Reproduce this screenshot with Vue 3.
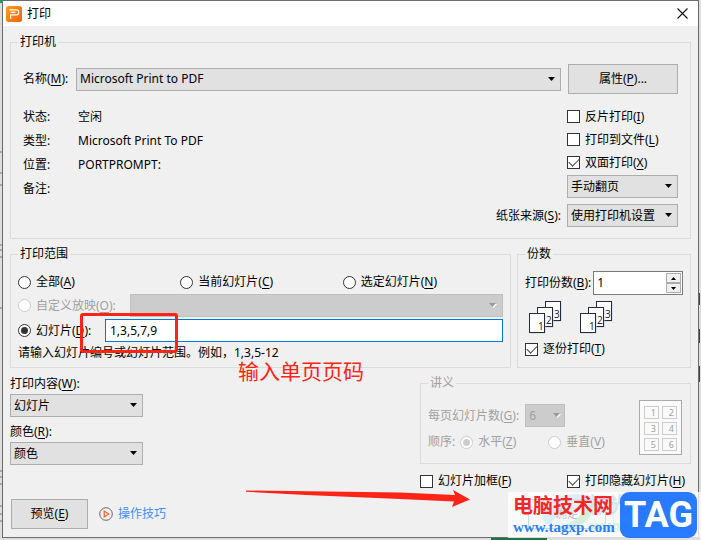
<template>
  <div class="desktop">
    <!-- Window behind the dialog -->
    <svg class="behind behind-left" viewBox="0 0 3 540" aria-hidden="true">
      <path d="M0 0h2v3H0z" fill="#1f9d5b" />
      <path d="M0 152h2M0 173h2M0 185h2M0 245h2M0 250h2M0 257h2M0 308h2M0 471h2M0 477h2M0 484h2M0 506h2M0 514h2M0 521h2" stroke="#777" />
    </svg>
    <svg class="behind behind-right" viewBox="0 0 2 540" aria-hidden="true">
      <path d="M0 293v12M0 329v14M0 366v16" stroke="#444" stroke-width="2" />
    </svg>

    <div class="dialog">
      <header class="titlebar">
        <svg class="logo" viewBox="0 0 16 16" aria-hidden="true">
          <defs>
            <linearGradient id="logoFill" x1="0" y1="0" x2="1" y2="1">
              <stop offset="0" stop-color="#ff9c1c" />
              <stop offset="1" stop-color="#f2640c" />
            </linearGradient>
          </defs>
          <rect width="16" height="16" rx="2.5" fill="url(#logoFill)" />
          <path d="M3.4 3.8h7.2q2 0 2 2v1q0 2-2 2H4.6v4M4.6 6.3h4.8" fill="none" stroke="#fff" stroke-width="1.2" />
        </svg>
        <h1>打印</h1>
        <button class="close" type="button" aria-label="关闭">
          <svg viewBox="0 0 11 11"><path d="M.5.5l10 10M10.5.5l-10 10" stroke="#111" stroke-width="1.1" /></svg>
        </button>
      </header>

      <form class="body" @submit.prevent>
        <!-- Printer part -->
        <fieldset class="printer">
          <legend>打印机</legend>
          <div class="name-row">
            <label for="printer">名称(<u>M</u>):</label>
            <span class="select grow">
              <select id="printer" v-model="printer"><option>Microsoft Print to PDF</option></select>
              <svg viewBox="0 0 7 4"><path d="M0 0h7L3.5 4z" /></svg>
            </span>
            <button class="btn props" type="button">属性(<u>P</u>)...</button>
          </div>
          <div class="details">
            <dl>
              <template v-for="d in details" :key="d.label">
                <dt>{{ d.label }}:</dt>
                <dd>{{ d.value }}</dd>
              </template>
            </dl>
            <div class="options">
              <label v-for="o in options" :key="o.key" class="check option">
                <input v-model="o.on" type="checkbox" />
                <span>{{ o.label }}(<u>{{ o.key }}</u>)</span>
              </label>
              <span class="select side duplex">
                <select v-model="duplex" aria-label="双面打印"><option>手动翻页</option></select>
                <svg viewBox="0 0 7 4"><path d="M0 0h7L3.5 4z" /></svg>
              </span>
              <div class="source">
                <label for="source">纸张来源(<u>S</u>):</label>
                <span class="select side">
                  <select id="source" v-model="source"><option>使用打印机设置</option></select>
                  <svg viewBox="0 0 7 4"><path d="M0 0h7L3.5 4z" /></svg>
                </span>
              </div>
            </div>
          </div>
        </fieldset>

        <div class="middle">
          <!-- Range part -->
          <fieldset class="range">
            <legend>打印范围</legend>
            <div class="range-top">
              <label v-for="r in ranges" :key="r.key" class="check">
                <input v-model="range" type="radio" name="range" :value="r.key" />
                <span>{{ r.label }}(<u>{{ r.key }}</u>)</span>
              </label>
            </div>
            <div class="range-row">
              <label class="check custom disabled">
                <input v-model="range" type="radio" name="range" value="O" disabled />
                <span>自定义放映(<u>O</u>):</span>
              </label>
              <span class="select grow off">
                <select aria-label="自定义放映" disabled></select>
                <svg viewBox="0 0 8 5"><path d="M1 1h7L4.500 5z" fill="#fff" /><path d="M0 0h7L3.500 4z" /></svg>
              </span>
            </div>
            <div class="range-row">
              <label class="check slides">
                <input v-model="range" type="radio" name="range" value="D" />
                <span>幻灯片(<u>D</u>):</span>
              </label>
              <input v-model="pages" class="pages grow" type="text" aria-label="幻灯片编号" />
            </div>
            <p class="hint">请输入幻灯片编号或幻灯片范围。例如，1,3,5-12</p>
          </fieldset>

          <!-- Copies part -->
          <fieldset class="copies">
            <legend>份数</legend>
            <div class="count-row">
              <label for="copies">打印份数(<u>B</u>):</label>
              <div class="spin">
                <input id="copies" v-model.number="copies" type="text" />
                <div class="steps">
                  <button type="button" aria-label="增加" @click="copies++">
                    <svg viewBox="0 0 5 3"><path d="M0 3h5L2.500 0z" /></svg>
                  </button>
                  <button type="button" aria-label="减少" @click="copies = Math.max(1, copies - 1)">
                    <svg viewBox="0 0 5 3"><path d="M0 0h5L2.500 3z" /></svg>
                  </button>
                </div>
              </div>
            </div>
            <div class="stacks">
              <svg v-for="s in 2" :key="s" viewBox="0 0 34 34" aria-hidden="true">
                <g v-for="p in sheets" :key="p.n">
                  <rect :x="p.x + 1.5" :y="p.y + 1.5" width="15" height="19" fill="#c9ccd6" />
                  <rect :x="p.x + .5" :y="p.y + .5" width="15" height="19" fill="#fff" stroke="#252a3c" />
                  <text :x="p.x + 9" :y="p.y + 17">{{ p.n }}</text>
                </g>
              </svg>
            </div>
            <label class="check">
              <input v-model="collate" type="checkbox" />
              <span>逐份打印(<u>T</u>)</span>
            </label>
          </fieldset>
        </div>

        <div class="lower">
          <div class="content">
            <label for="what">打印内容(<u>W</u>):</label>
            <span class="select">
              <select id="what" v-model="what"><option>幻灯片</option></select>
              <svg viewBox="0 0 7 4"><path d="M0 0h7L3.5 4z" /></svg>
            </span>
            <label for="color">颜色(<u>R</u>):</label>
            <span class="select">
              <select id="color" v-model="color"><option>颜色</option></select>
              <svg viewBox="0 0 7 4"><path d="M0 0h7L3.5 4z" /></svg>
            </span>
          </div>

          <div class="right">
            <!-- Handout part -->
            <fieldset class="handout disabled" disabled>
              <legend>讲义</legend>
              <div class="handout-fields">
                <div class="per-page">
                  <label for="per">每页幻灯片数(<u>G</u>):</label>
                  <span class="select off">
                    <select id="per"><option>6</option></select>
                    <svg viewBox="0 0 8 5"><path d="M1 1h7L4.500 5z" fill="#fff" /><path d="M0 0h7L3.500 4z" /></svg>
                  </span>
                </div>
                <div class="order">
                  <span>顺序:</span>
                  <label class="check"><input type="radio" name="order" checked /><span>水平(<u>Z</u>)</span></label>
                  <label class="check"><input type="radio" name="order" /><span>垂直(<u>V</u>)</span></label>
                </div>
              </div>
              <div class="thumb">
                <span v-for="n in 6" :key="n">{{ n }}</span>
              </div>
            </fieldset>
            <div class="extras">
              <label class="check"><input v-model="frame" type="checkbox" /><span>幻灯片加框(<u>F</u>)</span></label>
              <label class="check"><input v-model="hidden" type="checkbox" /><span>打印隐藏幻灯片(<u>H</u>)</span></label>
            </div>
          </div>
        </div>

        <footer class="footer">
          <button class="btn preview" type="button">预览(<u>E</u>)</button>
          <a class="tips" href="#">
            <svg viewBox="0 0 14 14" aria-hidden="true">
              <circle cx="7" cy="7" r="6.300" fill="none" stroke="#666" />
              <path d="M5.200 4v6l4.500-3z" fill="none" stroke="#f0602a" stroke-width="1.200" />
            </svg>
            操作技巧
          </a>
          <button class="btn ok" type="submit">确定</button>
          <button class="btn cancel" type="button">取消</button>
        </footer>
      </form>
    </div>

    <!-- Notes over the dialog -->
    <div class="mark-box"></div>
    <p class="mark-text">输入单页页码</p>
    <svg class="mark-arrow" viewBox="0 0 224 20" aria-hidden="true">
      <path d="M0 3.500L154 5.500L209 8L207 3L224 12.500L206 20L208 14.500L154 12L60 8L0 4.800Z" fill="#fb2416" />
    </svg>

    <div class="green-bar"></div>
    <div class="stamp">
      <svg class="swirl" viewBox="0 0 60 42" aria-hidden="true">
        <path d="M2 24C4 5 32-3 52 5C34 5 20 14 13 28C8 35 2 33 2 24z" fill="#d3e8fa" />
        <path d="M8 36C28 36 42 24 49 9C58 24 38 43 8 36z" fill="#c9ecd0" />
        <path d="M17 25C24 14 36 9 47 10C38 18 29 27 17 25z" fill="#e1eff3" />
      </svg>
      <div class="faint">
        <span class="faint-name">极光下载站</span>
        <span class="faint-url">www.xz7.com</span>
      </div>
      <div class="site">
        <strong>电脑技术网</strong>
        <span>www.tagxp.com</span>
      </div>
      <div class="tag">TAG</div>
    </div>
  </div>
</template>

<script setup>
import { ref } from "vue";

const printer = ref("Microsoft Print to PDF");
const duplex = ref("手动翻页");
const source = ref("使用打印机设置");
const range = ref("D");
const pages = ref("1,3,5,7,9");
const copies = ref(1);
const collate = ref(true);
const what = ref("幻灯片");
const color = ref("颜色");
const frame = ref(false);
const hidden = ref(true);

const details = [
  { label: "状态", value: "空闲" },
  { label: "类型", value: "Microsoft Print To PDF" },
  { label: "位置", value: "PORTPROMPT:" },
  { label: "备注", value: "" },
];
const options = ref([
  { label: "反片打印", key: "I", on: false },
  { label: "打印到文件", key: "L", on: false },
  { label: "双面打印", key: "X", on: true },
]);
const ranges = [
  { label: "全部", key: "A" },
  { label: "当前幻灯片", key: "C" },
  { label: "选定幻灯片", key: "N" },
];
const sheets = [
  { n: 3, x: 16, y: 0 },
  { n: 2, x: 8, y: 6 },
  { n: 1, x: 0, y: 12 },
];
</script>

<style>
body {
  background: #dedede;
}
</style>

<style scoped>
.desktop {
  position: relative;
  padding: 0 2px 2px;
  font-family: "Noto Sans", "Noto Sans CJK SC", sans-serif;
  font-size: 12px;
  line-height: 16px;
  color: #000;
}
.desktop * {
  box-sizing: border-box;
}
.behind {
  position: absolute;
  top: 0;
  height: 540px;
}
.behind-left {
  left: 0;
  width: 3px;
}
.behind-right {
  right: 0;
  width: 2px;
}
.dialog {
  position: relative;
  border: 1px solid #6b6b6b;
  background: #f0f0f0;
}

/* Title bar */
.titlebar {
  display: flex;
  align-items: center;
  gap: 5px;
  height: 25px;
  padding: 0 10px 0 3px;
  background: #fff;
}
.logo {
  width: 16px;
  height: 16px;
}
h1 {
  flex: 1;
  margin: 0;
  font-size: 12px;
  font-weight: 400;
}
.close {
  display: flex;
  padding: 0;
  border: 0;
  background: none;
}
.close svg {
  width: 11px;
  height: 11px;
}

.body {
  padding: 8px 7px 8px;
}
fieldset {
  min-width: 0;
  margin: 0;
  border: 1px solid #dcdcdc;
}
legend {
  height: 16px;
  padding: 0 2px;
}
u {
  text-underline-offset: 2px;
}
.grow {
  flex: 1;
}
.disabled {
  color: #a0a0a0;
}

/* Controls */
input,
select,
button {
  margin: 0;
  font: inherit;
  color: inherit;
}
.select {
  position: relative;
  display: block;
  height: 23px;
}
.select select {
  display: block;
  width: 100%;
  height: 23px;
  padding: 0 3px;
  border: 1px solid #adadad;
  border-radius: 0;
  background: #e1e1e1;
  appearance: none;
}
.select svg {
  position: absolute;
  top: 9px;
  right: 6px;
  width: 7px;
  height: 4px;
  pointer-events: none;
}
.select.off select {
  border-color: #bfbfbf;
  background: #ccc;
  color: #a0a0a0;
  opacity: 1;
}
.select.off svg {
  width: 8px;
  height: 5px;
  fill: #999;
}
.btn {
  height: 30px;
  padding: 0;
  border: 1px solid #adadad;
  background: #e1e1e1;
}
.check {
  display: flex;
  align-items: center;
  gap: 5px;
  white-space: nowrap;
}
.check input {
  display: grid;
  place-content: center;
  flex: none;
  width: 13px;
  height: 13px;
  border: 1px solid #333;
  background: #fff;
  appearance: none;
}
.check input[type="checkbox"]:checked::before {
  content: "";
  width: 9px;
  height: 5px;
  margin-bottom: 3px;
  border: solid #444;
  border-width: 0 0 1px 1px;
  transform: rotate(-45deg);
}
.check input[type="radio"] {
  border-radius: 50%;
}
.check input[type="radio"]:checked::before {
  content: "";
  width: 7px;
  height: 7px;
  border-radius: 50%;
  background: #333;
}
.check input[type="radio"]:disabled {
  border-color: #ccc;
}
.check input[type="radio"]:disabled::before {
  background: #ccc;
}

/* Printer part */
.printer {
  padding: 14px 12px 11px;
}
.printer legend {
  margin-left: -5px;
}
.name-row {
  display: flex;
  align-items: center;
}
.name-row label {
  width: 53px;
}
.props {
  width: 110px;
  margin-left: 7px;
}
.details {
  display: flex;
  justify-content: space-between;
  margin-top: 11px;
}
dl {
  display: grid;
  grid-template-columns: 55px auto;
  grid-auto-rows: 24px;
  align-items: center;
  margin: 0;
}
dd {
  margin: 0;
}
.options {
  display: flex;
  flex-direction: column;
  align-items: flex-end;
}
.option {
  width: 111px;
  height: 23px;
}
.side {
  width: 111px;
}
.duplex {
  margin-top: 1px;
}
.source {
  display: flex;
  align-items: center;
  gap: 6px;
  margin-top: 6px;
}

/* Range part */
.middle {
  display: flex;
  gap: 6px;
  margin-top: 7px;
}
.range {
  flex: 1;
  padding: 8px 7px 5px;
}
.range-top {
  display: grid;
  grid-template-columns: 1fr 1fr 1fr;
  column-gap: 2px;
  height: 24px;
}
.range-row {
  display: flex;
  margin-bottom: 2px;
}
.custom {
  width: 112px;
}
.slides {
  width: 87px;
}
.pages {
  min-width: 0;
  height: 23px;
  padding: 0 4px;
  border: 1px solid #0078d7;
  background: #fff;
}
.hint {
  margin: 0;
  line-height: 18px;
}

/* Copies part */
.copies {
  width: 174px;
  padding: 9px 7px 5px;
}
.count-row {
  display: flex;
  align-items: center;
  gap: 2px;
  white-space: nowrap;
}
.spin {
  display: flex;
  flex: 1;
  height: 24px;
  padding: 1px;
  border: 1px solid #7a7a7a;
  background: #fff;
}
.spin input {
  flex: 1;
  width: 0;
  padding: 0 2px;
  border: 0;
}
.steps {
  display: grid;
  width: 15px;
}
.steps button {
  display: grid;
  place-content: center;
  min-height: 0;
  padding: 0;
  border: 1px solid #acacac;
  background: #f0f0f0;
}
.steps svg {
  display: block;
  width: 5px;
  height: 3px;
}
.stacks {
  display: flex;
  gap: 17px;
  margin: 6px 4px;
}
.stacks svg {
  width: 34px;
  height: 34px;
}
.stacks text {
  font: 10px "Noto Sans", sans-serif;
  fill: #252a3c;
}

/* Lower part */
.lower {
  display: flex;
  justify-content: space-between;
  margin-top: 7px;
}
.content {
  width: 133px;
}
.content > label {
  display: block;
  height: 19px;
  line-height: 18px;
}
.content .select {
  margin-bottom: 6px;
}
.right {
  width: 271px;
}
.handout {
  display: flex;
  justify-content: space-between;
  padding: 9px 8px 8px 7px;
}
.per-page {
  display: flex;
  align-items: center;
  gap: 6px;
  margin-top: 4px;
}
.per-page .select {
  width: 40px;
}
.per-page .select svg {
  right: 4px;
}
.order {
  display: flex;
  gap: 5px;
  margin-top: 7px;
}
.order label + label {
  margin-left: 27px;
}
.thumb {
  display: grid;
  grid-template-columns: 1fr 1fr;
  gap: 3px;
  width: 43px;
  height: 55px;
  padding: 5px 4px 6px;
  border: 1px solid #aaa;
  background: #fafafa;
}
.thumb span {
  padding-right: 2px;
  border: 1px solid #ccc;
  font-size: 9px;
  line-height: 11px;
  text-align: right;
}
.extras {
  display: grid;
  grid-template-columns: 147px 1fr;
  align-items: center;
  height: 18px;
  margin-top: 8px;
}

.footer {
  display: flex;
  align-items: center;
  margin-top: 9px;
  padding-left: 1px;
}
.preview {
  width: 77px;
}
.tips {
  display: flex;
  align-items: center;
  gap: 5px;
  margin: 0 auto 0 11px;
  color: #3f8ef5;
  text-decoration: none;
}
.tips svg {
  width: 14px;
  height: 14px;
}
.ok,
.cancel {
  width: 78px;
}
.ok {
  border-color: #0078d7;
}
.cancel {
  margin-left: 7px;
}

/* Notes */
.mark-box {
  position: absolute;
  top: 313px;
  left: 80px;
  width: 98px;
  height: 40px;
  border: 3px solid #fb2416;
  border-radius: 3px;
}
.mark-text {
  position: absolute;
  top: 358px;
  left: 238px;
  margin: 0;
  font-size: 21px;
  line-height: 26px;
  color: #fb2416;
}
.mark-arrow {
  position: absolute;
  top: 487px;
  left: 246px;
  width: 224px;
  height: 20px;
}
.green-bar {
  position: absolute;
  bottom: 0;
  left: 491px;
  width: 56px;
  height: 2px;
  background: #217346;
}
.stamp {
  position: absolute;
  right: 0;
  bottom: 2px;
  display: flex;
  justify-content: space-between;
  width: 193px;
  height: 46px;
  padding: 0 4px 0 5px;
  background: rgba(255, 255, 255, 0.75);
}
.swirl {
  position: absolute;
  top: 0;
  left: 33px;
  width: 60px;
  height: 42px;
  opacity: 0.7;
}
.faint {
  position: absolute;
  top: 0;
  right: 8px;
  display: grid;
  justify-items: end;
  font-weight: 700;
  white-space: nowrap;
}
.faint-name {
  font-size: 21px;
  line-height: 24px;
  color: #d0e8f6;
}
.faint-url {
  font-size: 15px;
  line-height: 18px;
  color: #d5efd8;
}
.site {
  position: relative;
  display: grid;
  align-content: start;
  white-space: nowrap;
}
.site strong {
  font-family: "Noto Sans CJK SC", sans-serif;
  font-size: 20px;
  line-height: 26px;
  color: #f22727;
}
.site span {
  font: 700 15px/18px "Liberation Serif", serif;
  color: #2a7fff;
}
.tag {
  position: relative;
  width: 77px;
  border-radius: 9px;
  background: rgba(24, 112, 255, 0.92);
  font: 700 36px/46px Roboto, sans-serif;
  color: #fff;
  text-align: center;
}
</style>
